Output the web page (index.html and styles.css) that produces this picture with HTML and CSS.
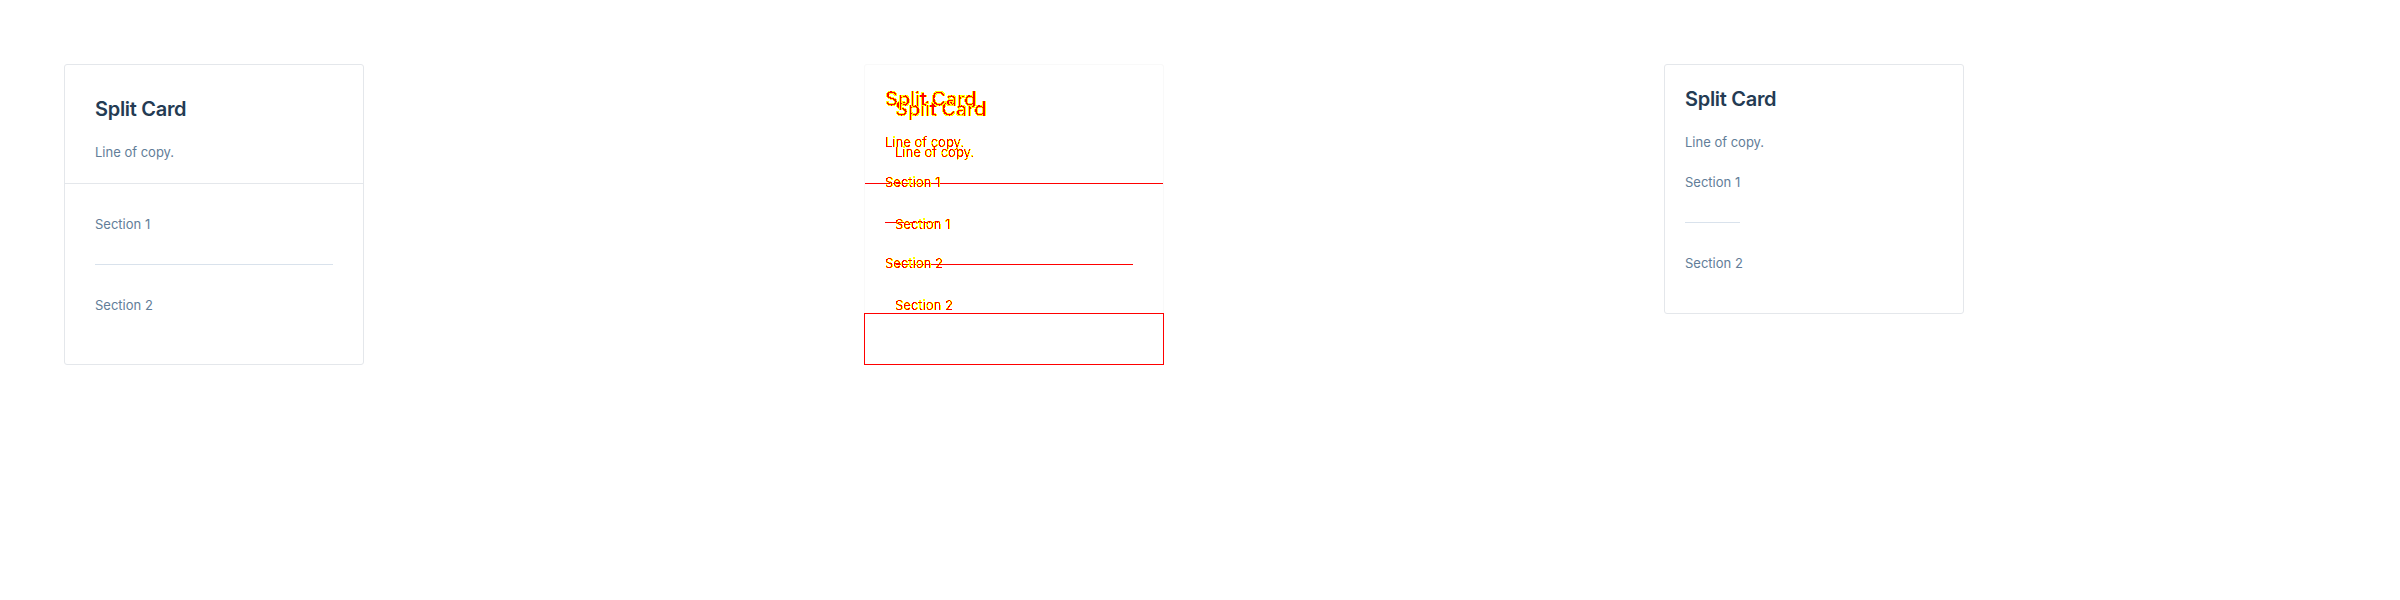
FILE: index.html
```html
<!DOCTYPE html>
<html lang="en">
<head>
<meta charset="utf-8">
<title>Split Card diff</title>
<link rel="stylesheet" href="styles.css">
</head>
<body>
<svg class="defs" width="0" height="0" aria-hidden="true">
  <filter id="aa" x="-10%" y="-20%" width="120%" height="140%" color-interpolation-filters="sRGB">
    <feComponentTransfer in="SourceAlpha" result="core">
      <feFuncA type="discrete" tableValues="0 0 0 0 0 0 1 1 1 1"/>
    </feComponentTransfer>
    <feFlood flood-color="#ff0000" result="red"/>
    <feComposite in="red" in2="core" operator="in" result="redcore"/>
    <feComponentTransfer in="SourceAlpha" result="edge">
      <feFuncA type="discrete" tableValues="0 1 1 1 1 1 1 1 1 1"/>
    </feComponentTransfer>
    <feFlood flood-color="#ffff00" result="yellow"/>
    <feComposite in="yellow" in2="edge" operator="in" result="yedge"/>
    <feMerge>
      <feMergeNode in="yedge"/>
      <feMergeNode in="redcore"/>
    </feMerge>
  </filter>
  <filter id="aa-bold" x="-10%" y="-20%" width="120%" height="140%" color-interpolation-filters="sRGB">
    <feComponentTransfer in="SourceAlpha" result="core">
      <feFuncA type="discrete" tableValues="0 0 0 0 0 0 0 0 0 0 0 0 0 0 0 0 0 0 0 1"/>
    </feComponentTransfer>
    <feFlood flood-color="#ff0000" result="red"/>
    <feComposite in="red" in2="core" operator="in" result="redcore"/>
    <feComponentTransfer in="SourceAlpha" result="edge">
      <feFuncA type="discrete" tableValues="0 1 1 1 1 1 1 1 1 1 1 1 1 1 1 1 1 1 1 1"/>
    </feComponentTransfer>
    <feFlood flood-color="#ffff00" result="yellow"/>
    <feComposite in="yellow" in2="edge" operator="in" result="yedge"/>
    <feMerge>
      <feMergeNode in="yedge"/>
      <feMergeNode in="redcore"/>
    </feMerge>
  </filter>
</svg>
<main class="panels">
  <section class="panel">
    <div class="card card-expected">
      <div class="card-head">
        <h3 class="title">Split Card</h3>
        <p class="copy">Line of copy.</p>
      </div>
      <div class="card-body">
        <div class="sec sec-first">Section 1</div>
        <div class="sec sec-last">Section 2</div>
      </div>
    </div>
  </section>

  <section class="panel">
    <div class="diff">
      <div class="ghost ghost-expected">
        <div class="card-head">
          <h3 class="title d-text d-bold"><span>Split Card</span></h3>
          <p class="copy d-text"><span>Line of copy.</span></p>
        </div>
        <div class="card-body">
          <div class="sec sec-first"><span class="d-text">Section 1</span></div>
          <div class="sec sec-last"><span class="d-text">Section 2</span></div>
        </div>
      </div>
      <div class="ghost ghost-actual">
        <h3 class="title d-text d-bold"><span>Split Card</span></h3>
        <p class="copy d-text"><span>Line of copy.</span></p>
        <div class="a-body">
          <div class="sec a-first"><span class="d-text">Section 1</span></div>
          <div class="sec a-last"><span class="d-text">Section 2</span></div>
        </div>
      </div>
      <div class="miss"></div>
    </div>
  </section>

  <section class="panel">
    <div class="card card-actual">
      <h3 class="title">Split Card</h3>
      <p class="copy">Line of copy.</p>
      <div class="a-body">
        <div class="sec a-first">Section 1</div>
        <div class="sec a-last">Section 2</div>
      </div>
    </div>
  </section>
</main>
</body>
</html>
```

FILE: styles.css
```css
* { box-sizing: border-box; }
html, body { margin: 0; background: #ffffff; }
body { font-family: Inter, "Noto Sans", sans-serif; }

.defs { position: absolute; width: 0; height: 0; overflow: hidden; }

.panels {
  display: grid;
  grid-template-columns: repeat(3, 800px);
  width: 2400px;
}
.panel {
  padding: 64px;
}

.title {
  margin: 0 0 19px;
  font-size: 20px;
  line-height: 28px;
  font-weight: 600;
  color: #243b53;
  letter-spacing: -0.3px;
}
.copy {
  margin: 0;
  font-size: 13px;
  line-height: 20px;
  color: #627d98;
}
.sec {
  font-size: 13px;
  line-height: 20px;
  color: #627d98;
}

/* expected card */
.card {
  width: 300px;
  background: #fff;
  border: 1px solid #e4e7eb;
  border-radius: 3px;
}
.card-head {
  padding: 30px 30px 21px;
  border-bottom: 1px solid #e4e7eb;
}
.card-body {
  padding: 0 30px 19px;
}
.sec-first {
  padding: 30px 0;
  border-bottom: 1px solid #d9e2ec;
}
.sec-last {
  padding: 30px 0;
}

/* actual card */
.card-actual {
  padding: 20px;
}
.a-body {
  display: flex;
  flex-direction: column;
  align-items: flex-start;
}
.a-first {
  padding: 20px 0 30px;
  border-bottom: 1px solid #d9e2ec;
}
.a-last {
  padding: 30px 0 20px;
}

/* diff panel */
.diff {
  display: grid;
  width: 300px;
  height: 301px;
}
.diff > * {
  grid-area: 1 / 1;
}
.ghost-expected {
  border: 1px solid #f9f9f9;
  border-bottom-color: transparent;
  border-radius: 3px;
}
.ghost-expected .card-head {
  border-bottom-color: #ff0000;
}
.ghost-expected .sec-first {
  border-bottom-color: #ff0000;
}
.ghost-actual {
  padding: 21px;
  align-self: start;
}
.ghost-actual .a-first {
  border-bottom-color: #ff0000;
}
.miss {
  align-self: end;
  height: 52px;
  border: 1px solid #ff0000;
}
.d-text span,
span.d-text {
  display: inline-block;
  color: #000000;
  filter: url(#aa);
}
.d-bold span {
  filter: url(#aa-bold);
}
```
